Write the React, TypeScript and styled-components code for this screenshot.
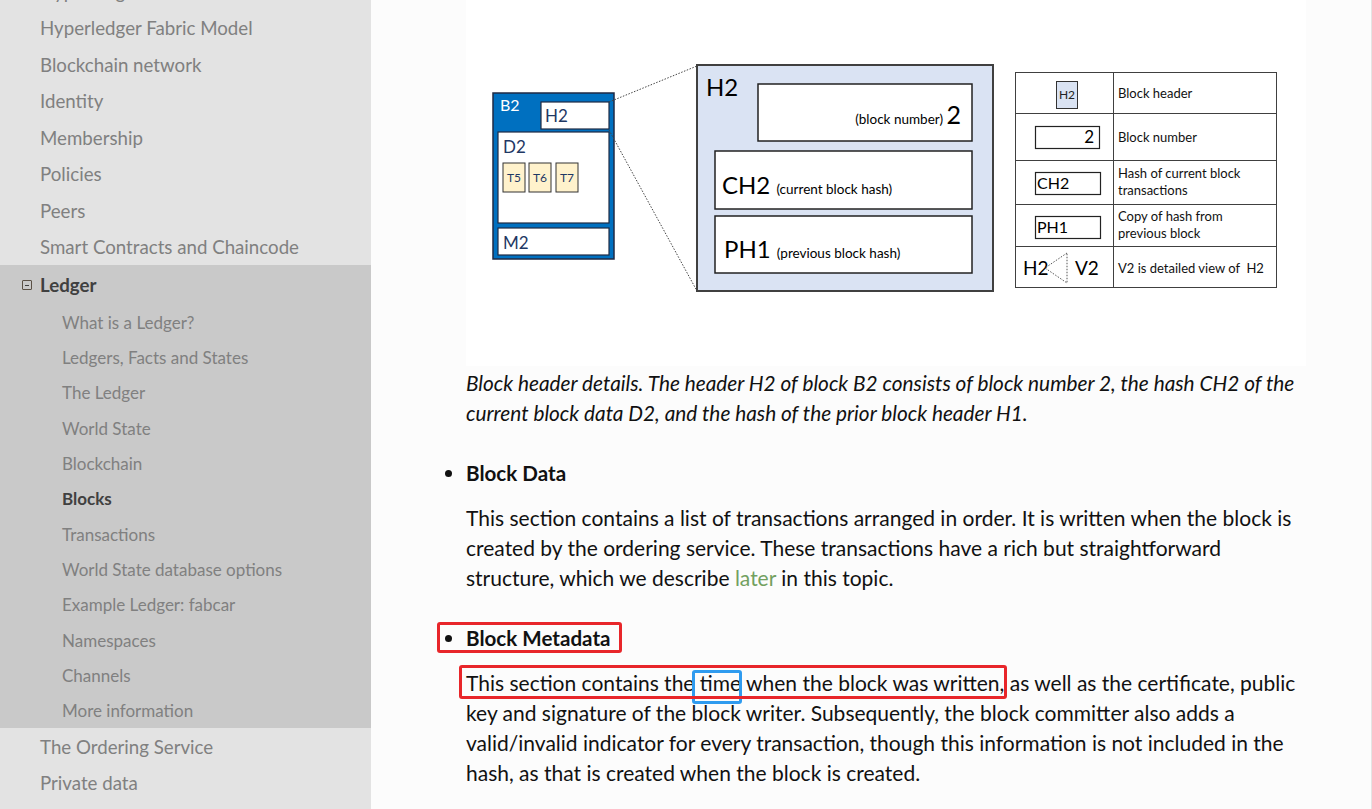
import styled, { createGlobalStyle } from "styled-components";

const GlobalStyle = createGlobalStyle`
  html, body {
    margin: 0;
    padding: 0;
  }
  body {
    font-family: Lato, "Open Sans", sans-serif;
    background: #fcfcfc;
    overflow: hidden;
  }
`;

const topItems = [
  "Hyperledger Fabric Functionalities",
  "Hyperledger Fabric Model",
  "Blockchain network",
  "Identity",
  "Membership",
  "Policies",
  "Peers",
  "Smart Contracts and Chaincode",
];

const ledgerItems = [
  "What is a Ledger?",
  "Ledgers, Facts and States",
  "The Ledger",
  "World State",
  "Blockchain",
  "Blocks",
  "Transactions",
  "World State database options",
  "Example Ledger: fabcar",
  "Namespaces",
  "Channels",
  "More information",
];

const afterItems = ["The Ordering Service", "Private data", "Channel capabilities"];

function BlockDiagram() {
  const navy = "#1f3864";
  return (
    <svg width="840" height="366" viewBox="0 0 840 366" fontFamily="Lato, 'Open Sans', sans-serif">
      {/* block B2 */}
      <rect x="27" y="93" width="121" height="166" fill="#0070c0" stroke="#1f2a44" strokeWidth="1.5" />
      <text x="34" y="111" fontSize="16" fill="#fff">B2</text>
      <rect x="75" y="102" width="68" height="27" fill="#fff" stroke="#1f2a44" strokeWidth="1.2" />
      <text x="79" y="122" fontSize="17" fill={navy}>H2</text>
      <rect x="32" y="132" width="111" height="91" fill="#fff" stroke="#1f2a44" strokeWidth="1.2" />
      <text x="37" y="153" fontSize="17" fill={navy}>D2</text>
      {[37, 63, 90].map((x, i) => (
        <g key={x}>
          <rect x={x} y="163" width="22" height="29" fill="#fff2cc" stroke="#333" strokeWidth="1" />
          <text x={x + 11} y="182" fontSize="12" fill={navy} textAnchor="middle">{`T${5 + i}`}</text>
        </g>
      ))}
      <rect x="32" y="228" width="111" height="27" fill="#fff" stroke="#1f2a44" strokeWidth="1.2" />
      <text x="37" y="249" fontSize="17" fill={navy}>M2</text>

      {/* zoom lines */}
      <line x1="143" y1="102" x2="231" y2="66" stroke="#444" strokeWidth="1" strokeDasharray="1.5 1.5" />
      <line x1="143" y1="130" x2="231" y2="291" stroke="#444" strokeWidth="1" strokeDasharray="1.5 1.5" />

      {/* detailed header V2 */}
      <rect x="231" y="65" width="296" height="226" fill="#dae3f3" stroke="#404040" strokeWidth="2" />
      <text x="240" y="96" fontSize="24" fill="#000">H2</text>
      <rect x="292" y="84" width="214" height="57" fill="#fff" stroke="#222" strokeWidth="1.5" />
      <text x="495" y="124" textAnchor="end" fill="#000">
        <tspan fontSize="13.5">(block number) </tspan>
        <tspan fontSize="25">2</tspan>
      </text>
      <rect x="249" y="151" width="257" height="58" fill="#fff" stroke="#222" strokeWidth="1.5" />
      <text x="256" y="194" fill="#000">
        <tspan fontSize="24">CH2 </tspan>
        <tspan fontSize="13.5">(current block hash)</tspan>
      </text>
      <rect x="249" y="216" width="257" height="57" fill="#fff" stroke="#222" strokeWidth="1.5" />
      <text x="258" y="258" fill="#000">
        <tspan fontSize="24">PH1 </tspan>
        <tspan fontSize="13.5">(previous block hash)</tspan>
      </text>

      {/* legend */}
      <rect x="549.5" y="72.5" width="261" height="215" fill="#fff" stroke="#404040" strokeWidth="1" />
      <line x1="647.5" y1="72" x2="647.5" y2="288" stroke="#404040" strokeWidth="1" />
      {[113.5, 160.5, 204.5, 246.5].map((y) => (
        <line key={y} x1="549" y1={y} x2="811" y2={y} stroke="#404040" strokeWidth="1" />
      ))}
      <rect x="590.5" y="81.5" width="21" height="27" fill="#dae3f3" stroke="#333" strokeWidth="1" />
      <text x="601" y="99" fontSize="12" textAnchor="middle" fill="#222">H2</text>
      <rect x="569.5" y="126.5" width="64" height="22" fill="#fff" stroke="#222" strokeWidth="1.2" />
      <text x="628" y="143" fontSize="17" textAnchor="end" fill="#000">2</text>
      <rect x="569.5" y="172.5" width="65" height="22" fill="#fff" stroke="#222" strokeWidth="1.2" />
      <text x="571" y="189" fontSize="16" fill="#000">CH2</text>
      <rect x="569.5" y="216.5" width="65" height="22" fill="#fff" stroke="#222" strokeWidth="1.2" />
      <text x="571" y="233" fontSize="16" fill="#000">PH1</text>
      <text x="557" y="275" fontSize="19" fill="#000">H2</text>
      <polyline points="601,253 579,268 601,283 601,253" fill="none" stroke="#555" strokeWidth="1" strokeDasharray="1.5 1.5" />
      <text x="609" y="275" fontSize="19" fill="#000">V2</text>

      <g fontSize="13" fill="#111">
        <text x="652" y="98">Block header</text>
        <text x="652" y="142">Block number</text>
        <text x="652" y="178">Hash of current block</text>
        <text x="652" y="195">transactions</text>
        <text x="652" y="221">Copy of hash from</text>
        <text x="652" y="238">previous block</text>
        <text x="652" y="273">V2 is detailed view of{"\u00a0\u00a0"}H2</text>
      </g>
    </svg>
  );
}

export default function App() {
  return (
    <>
      <GlobalStyle />
      <Page>
        <Sidebar>
          <Menu>
            {topItems.map((t) => (
              <TopItem key={t}>{t}</TopItem>
            ))}
            <Section>
              <SectionHead>
                <Toggle />
                Ledger
              </SectionHead>
              {ledgerItems.map((t) => (
                <SubItem key={t} $active={t === "Blocks"}>
                  {t}
                </SubItem>
              ))}
            </Section>
            {afterItems.map((t) => (
              <TopItem key={t}>{t}</TopItem>
            ))}
          </Menu>
        </Sidebar>
        <Main>
          <Content>
            <BulletList>
              <Item $plain>
                <Figure>
                  <BlockDiagram />
                </Figure>
                <Caption>
                  Block header details. The header H2 of block B2 consists of block number 2, the hash CH2 of the
                  current block data D2, and the hash of the prior block header H1.
                </Caption>
              </Item>
              <Item>
                <ItemTitle>Block Data</ItemTitle>
                <Para>
                  This section contains a list of transactions arranged in order. It is written when the block is
                  created by the ordering service. These transactions have a rich but straightforward structure,
                  which we describe <Link href="#">later</Link> in this topic.
                </Para>
              </Item>
              <Item>
                <ItemTitle $marked>Block Metadata</ItemTitle>
                <Para>
                  <Marked>
                    This section contains the <Spot>time</Spot> when the block was written,
                  </Marked>{" "}
                  as well as the certificate, public key and signature of the block writer. Subsequently, the block
                  committer also adds a valid/invalid indicator for every transaction, though this information is
                  not included in the hash, as that is created when the block is created.
                </Para>
              </Item>
            </BulletList>
          </Content>
        </Main>
      </Page>
    </>
  );
}

const Page = styled.div`
  display: flex;
  height: 809px;
  overflow: hidden;
`;

const Sidebar = styled.nav`
  width: 371px;
  flex-shrink: 0;
  background: #e3e3e3;
  overflow: hidden;
`;

const Menu = styled.div`
  margin-top: -26.75px;
  display: flex;
  flex-direction: column;
`;

const TopItem = styled.div`
  height: 36.5px;
  display: flex;
  align-items: center;
  padding-left: 40px;
  font-size: 18.7px;
  color: #808080;
  white-space: nowrap;
`;

const Section = styled.div`
  background: #c9c9c9;
  display: flex;
  flex-direction: column;
`;

const SectionHead = styled.div`
  height: 39.5px;
  display: flex;
  align-items: center;
  padding-left: 22px;
  font-size: 18.7px;
  font-weight: 700;
  color: #404040;
`;

const Toggle = styled.span`
  position: relative;
  width: 8px;
  height: 8px;
  border: 1px solid #5a5045;
  border-radius: 1px;
  margin-right: 8px;
  &::after {
    content: "";
    position: absolute;
    left: 2px;
    right: 2px;
    top: 3.5px;
    height: 1px;
    background: #404040;
  }
`;

const SubItem = styled.div<{ $active?: boolean }>`
  height: 35.3px;
  display: flex;
  align-items: center;
  padding-left: 62px;
  font-size: 17px;
  color: ${(p) => (p.$active ? "#404040" : "#808080")};
  font-weight: ${(p) => (p.$active ? 700 : 400)};
`;

const Main = styled.main`
  flex: 1;
  background: #fcfcfc;
  border-right: 1px solid #e4e4e4;
`;

const Content = styled.div`
  padding-left: 71px;
  width: 864px;
`;

const BulletList = styled.ul`
  margin: 0;
  padding-left: 24px;
  list-style: disc;
  color: #111;
`;

const Item = styled.li<{ $plain?: boolean }>`
  list-style: ${(p) => (p.$plain ? "none" : "disc")};
  margin-top: ${(p) => (p.$plain ? "0" : "30px")};
  font-size: 21px;
`;

const Figure = styled.div`
  width: 840px;
  height: 366px;
  background: #fff;
`;

const Caption = styled.p`
  margin: 2px 0 0;
  font-size: 20.8px;
  line-height: 30px;
  font-style: italic;
`;

const ItemTitle = styled.div<{ $marked?: boolean }>`
  position: relative;
  display: inline-block;
  font-size: 20.6px;
  line-height: 30px;
  font-weight: 700;
  &::before {
    content: "";
    display: ${(p) => (p.$marked ? "block" : "none")};
    position: absolute;
    left: -29px;
    right: -11px;
    top: -1px;
    bottom: 0;
    border: 3px solid #e8262a;
    border-radius: 3px;
  }
`;

const Para = styled.p`
  margin: 15px 0 0;
  font-size: 21px;
  line-height: 30px;
`;

const Link = styled.a`
  color: #72a060;
  text-decoration: none;
`;

const Marked = styled.span`
  position: relative;
  &::after {
    content: "";
    position: absolute;
    left: -7px;
    right: -3px;
    top: -5.5px;
    bottom: -3.5px;
    border: 3px solid #e8262a;
    border-radius: 3px;
  }
`;

const Spot = styled.span`
  position: relative;
  &::after {
    content: "";
    position: absolute;
    left: -8px;
    right: -1px;
    top: 0;
    bottom: -8.5px;
    border: 3px solid #2f9bef;
    border-radius: 3px;
  }
`;
